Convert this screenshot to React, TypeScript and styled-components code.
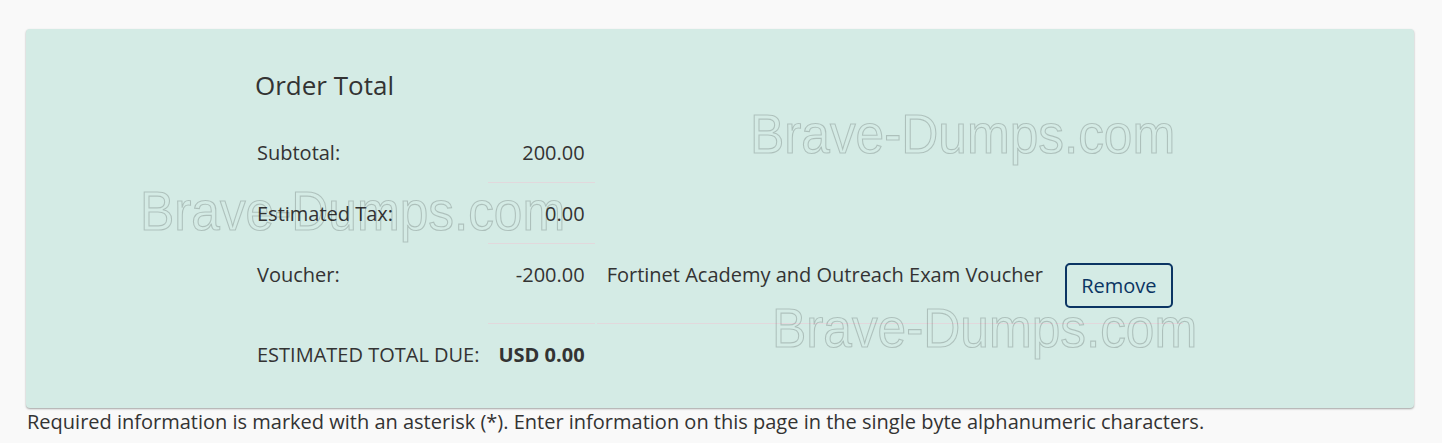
import React from 'react';
import styled, { createGlobalStyle } from 'styled-components';

const GlobalStyle = createGlobalStyle`
  body {
    margin: 0;
    background-color: #f9f9f9;
    font-family: "Open Sans", "Noto Sans", sans-serif;
    color: #333333;
  }
`;

const Page = styled.div`
  padding: 29px 28px 0 26px;
`;

const Card = styled.section`
  position: relative;
  padding: 39px 0 22px 219px;
  background-color: #d4ebe5;
  border-radius: 4px;
  box-shadow: 0 1px 2px rgba(0, 0, 0, 0.35);
  overflow: hidden;
`;

const Title = styled.h2`
  margin: 0 0 20px 10px;
  font-size: 26px;
  font-weight: 400;
  line-height: 34px;
  color: #333333;
`;

const Totals = styled.table`
  border-collapse: separate;
  border-spacing: 2px 1px;
  font-size: 20px;
  line-height: 28px;
`;

const Cell = styled.td<{ $line?: boolean }>`
  padding: 16px 10px 15px;
  vertical-align: top;
  white-space: nowrap;
  border-bottom: 1px solid ${(p) => (p.$line ? '#e2d8dc' : 'transparent')};
`;

const Label = styled(Cell)`
  padding-right: 7px;
`;

const Amount = styled(Cell)<{ $strong?: boolean }>`
  width: 83px;
  text-align: right;
  font-weight: ${(p) => (p.$strong ? 700 : 400)};
`;

const Description = styled(Cell)`
  padding-left: 10px;
`;

const RemoveButton = styled.button`
  display: block;
  width: 108px;
  height: 45px;
  margin-top: 2px;
  padding: 0;
  background: transparent;
  border: 2px solid #0b3563;
  border-radius: 5px;
  font-family: "Open Sans", "Noto Sans", sans-serif;
  font-size: 20px;
  color: #0b3563;
  cursor: pointer;
`;

const Watermark = styled.span<{ $x: number; $y: number }>`
  position: absolute;
  left: ${(p) => p.$x}px;
  top: ${(p) => p.$y}px;
  font-family: "Liberation Sans", Arial, sans-serif;
  font-size: 56px;
  line-height: 1;
  white-space: nowrap;
  color: transparent;
  -webkit-text-stroke: 1.2px rgba(0, 0, 0, 0.18);
  transform: scaleX(0.917);
  transform-origin: left top;
  pointer-events: none;
`;

const Note = styled.p`
  margin: 0 0 0 1px;
  font-size: 20px;
  line-height: 28px;
`;

const App = () => {
  return (
    <>
      <GlobalStyle />
      <Page>
        <Card>
          <Title>Order Total</Title>
          <Totals>
            <tbody>
              <tr>
                <Label>Subtotal:</Label>
                <Amount $line>200.00</Amount>
              </tr>
              <tr>
                <Label>Estimated Tax:</Label>
                <Amount $line>0.00</Amount>
              </tr>
              <tr>
                <Label>Voucher:</Label>
                <Amount $line>-200.00</Amount>
                <Description $line>Fortinet Academy and Outreach Exam Voucher</Description>
                <Cell $line>
                  <RemoveButton type="button">Remove</RemoveButton>
                </Cell>
              </tr>
              <tr>
                <Label>ESTIMATED TOTAL DUE:</Label>
                <Amount $strong>USD 0.00</Amount>
              </tr>
            </tbody>
          </Totals>
          <Watermark $x={724} $y={77}>Brave-Dumps.com</Watermark>
          <Watermark $x={114} $y={154}>Brave-Dumps.com</Watermark>
          <Watermark $x={746} $y={271}>Brave-Dumps.com</Watermark>
        </Card>
        <Note>
          Required information is marked with an asterisk (*). Enter information on this page in the single byte
          alphanumeric characters.
        </Note>
      </Page>
    </>
  );
};

export default App;
